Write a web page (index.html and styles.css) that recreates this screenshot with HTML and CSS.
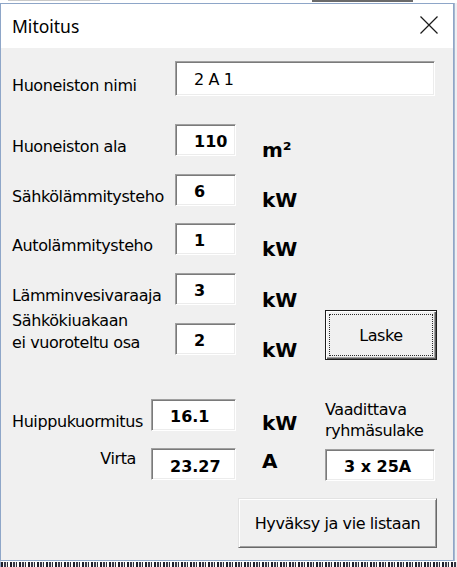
FILE: index.html
```html
<!DOCTYPE html>
<html lang="fi">
<head>
<meta charset="utf-8">
<title>Mitoitus</title>
<link rel="stylesheet" href="styles.css">
</head>
<body>
<div class="desk-top"><span class="dt-a"></span><span class="dt-b"></span></div>
<div class="screen">
  <div class="window">
    <div class="titlebar">
      <span class="title">Mitoitus</span>
      <span class="close" aria-label="Sulje">
        <svg width="18" height="18" viewBox="0 0 18 18"><path d="M0.5 0.5 L17.5 17.5 M17.5 0.5 L0.5 17.5" stroke="#1a1a1a" stroke-width="1.2" fill="none"/></svg>
      </span>
    </div>
    <div class="content">
      <div class="row row-nimi">
        <span class="label lab-nimi">Huoneiston nimi</span>
        <span class="box box-nimi">2 A 1</span>
      </div>
      <div class="row">
        <span class="label">Huoneiston ala</span>
        <span class="box box-small">110</span>
        <span class="unit">m²</span>
      </div>
      <div class="row">
        <span class="label">Sähkölämmitysteho</span>
        <span class="box box-small">6</span>
        <span class="unit">kW</span>
      </div>
      <div class="row row-auto">
        <span class="label">Autolämmitysteho</span>
        <span class="box box-small">1</span>
        <span class="unit">kW</span>
      </div>
      <div class="row">
        <span class="label">Lämminvesivaraaja</span>
        <span class="box box-small">3</span>
        <span class="unit unit-low">kW</span>
      </div>
      <div class="row row-kiuas">
        <span class="label label-two">Sähkökiuakaan<br>ei vuoroteltu osa</span>
        <span class="box box-small box-kiuas">2</span>
        <span class="unit unit-kiuas">kW</span>
        <button class="btn btn-default">Laske</button>
      </div>
      <div class="row row-huippu">
        <span class="label">Huippukuormitus</span>
        <span class="box box-wide">16.1</span>
        <span class="unit unit-huippu">kW</span>
        <span class="note">Vaadittava<br>ryhmäsulake</span>
      </div>
      <div class="row row-virta">
        <span class="label label-right">Virta</span>
        <span class="box box-wide">23.27</span>
        <span class="unit unit-a">A</span>
        <span class="box box-fuse">3 x 25A</span>
      </div>
      <div class="row row-accept">
        <button class="btn btn-accept">Hyväksy ja vie listaan</button>
      </div>
    </div>
  </div>
  <div class="side"></div>
</div>
<div class="desk-bottom"></div>
</body>
</html>
```

FILE: styles.css
```css
* { box-sizing: border-box; }

html, body {
  margin: 0;
  padding: 0;
  width: 457px;
  height: 567px;
  overflow: hidden;
  background: #ffffff;
}

body {
  font-family: "DejaVu Sans", sans-serif;
  color: #000;
}

.desk-top {
  height: 3px;
  display: flex;
  align-items: flex-start;
}
.dt-a {
  margin-left: 8px;
  width: 92px;
  height: 1px;
  background: #c9c9c9;
}
.dt-b {
  margin-left: 212px;
  width: 101px;
  height: 2px;
  background: #6a6a6a;
}

.screen {
  display: flex;
  height: 558px;
}

.window {
  width: 454px;
  height: 558px;
  border: 1px solid #8ea6c8;
  display: flex;
  flex-direction: column;
  background: #f0f0f0;
}

.side {
  flex: 1;
  background: #eef0f3;
  border-left: 1px solid #a9b8cf;
}

.titlebar {
  height: 44px;
  background: #ffffff;
  display: flex;
  align-items: flex-start;
  justify-content: space-between;
  padding: 0 15px 0 11px;
}
.title {
  font-family: "Noto Sans", sans-serif;
  font-size: 17.5px;
  line-height: 24px;
  padding-top: 10px;
  color: #000;
}
.close {
  display: flex;
  padding-top: 12px;
}

.content {
  flex: 1;
  padding: 0 0 12px 11px;
  display: flex;
  flex-direction: column;
}

.row {
  display: grid;
  grid-template-columns: 139px 24px 61px 26px 63px 112px;
  height: 32px;
  margin-top: 18px;
  align-items: start;
}
.row-nimi { height: 35px; margin-top: 13px; }
.row-nimi + .row { margin-top: 28px; }
.row-auto { margin-top: 17px; }
.row-kiuas { height: 50px; margin-top: 5px; }
.row-huippu { height: 31px; margin-top: 39px; }
.row-accept { height: 50px; }

.label {
  grid-column: 1 / 3;
  font-size: 16px;
  line-height: 20px;
  letter-spacing: -0.4px;
  padding-top: 13px;
  white-space: nowrap;
}
.lab-nimi { padding-top: 15px; }
.label-two { line-height: 22px; padding-top: 0; }
.row-huippu .label { grid-column: 1 / 2; padding-top: 13px; }
.label-right {
  grid-column: 1 / 2;
  text-align: right;
  padding: 1px 15px 0 0;
}

.box {
  display: block;
  height: 32px;
  background: #ffffff;
  border-style: solid;
  border-width: 1px;
  border-color: #a0a0a0 #ffffff #ffffff #a0a0a0;
  box-shadow: inset 1px 1px 0 #7a7a7a, inset -1px -1px 0 #ececec;
  font-weight: bold;
  font-size: 16px;
  line-height: 20px;
  padding: 7px 0 0 18px;
  white-space: nowrap;
}
.box-small { grid-column: 3 / 4; }
.box-kiuas { margin-top: 13px; }
.box-wide { grid-column: 2 / 4; }
.box-nimi {
  grid-column: 3 / 7;
  margin-right: 2px;
  height: 35px;
  font-weight: normal;
  letter-spacing: -0.4px;
  padding-top: 8px;
}
.box-fuse {
  grid-column: 6 / 7;
  margin-right: 2px;
  margin-top: 1px;
}
.row-virta .box-wide { padding-top: 8px; }
.box-fuse { padding-top: 7px; }

.unit {
  grid-column: 5 / 6;
  font-weight: bold;
  font-size: 20px;
  line-height: 24px;
  padding-top: 14px;
  white-space: nowrap;
}
.unit-low { padding-top: 15px; }
.unit-kiuas { padding-top: 28px; }
.unit-huippu { padding-top: 12px; }
.unit-a { padding-top: 1px; }

.note {
  grid-column: 6 / 7;
  font-size: 16px;
  line-height: 21px;
  letter-spacing: -0.4px;
  white-space: nowrap;
}

.btn {
  font-family: "DejaVu Sans", sans-serif;
  font-size: 16px;
  letter-spacing: -0.4px;
  color: #000;
  background: #f0f0f0;
  margin: 0;
  padding: 0;
  display: flex;
  align-items: center;
  justify-content: center;
}
.btn-default {
  grid-column: 6 / 7;
  height: 50px;
  border: 1px solid #1c1c1c;
  box-shadow: inset 1px 1px 0 #ffffff, inset -1px -1px 0 #5a5a5a, inset -2px -2px 0 #a0a0a0;
  outline: 1px dotted #2a2a2a;
  outline-offset: -5px;
  padding-top: 1px;
}
.btn-accept {
  grid-column: 4 / 7;
  margin-left: 2px;
  height: 50px;
  border-style: solid;
  border-width: 1px;
  border-color: #e3e3e3 #696969 #696969 #e3e3e3;
  box-shadow: inset 1px 1px 0 #ffffff, inset -1px -1px 0 #a0a0a0;
  padding-top: 1px;
}

.desk-bottom {
  height: 6px;
  border-left: 1px solid #8ea6c8;
  border-top: 1px solid #ffffff;
  background:
    repeating-linear-gradient(90deg, #1e1e2a 0 2px, #f4f4f4 2px 3px, #3a3a48 3px 5px, #e8e8e8 5px 6px, #2a2a36 6px 7px, #fafafa 7px 9px);
}
```
